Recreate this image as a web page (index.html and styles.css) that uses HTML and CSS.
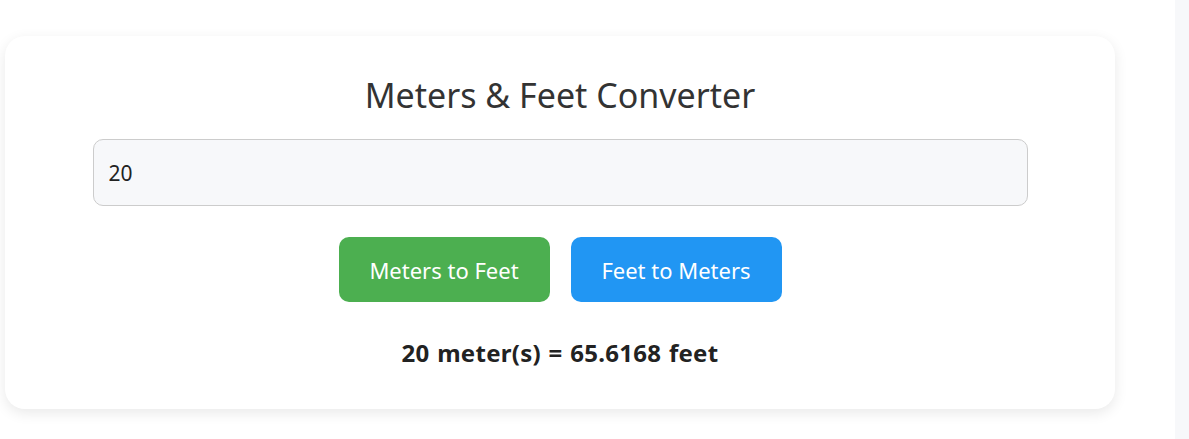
FILE: index.html
```html
<!DOCTYPE html>
<html lang="en">
<head>
    <meta charset="UTF-8">
    <meta name="viewport" content="width=device-width, initial-scale=1.0">
    <title>Meters & Feet Converter</title>
    <link rel="stylesheet" href="styles.css">
</head>
<body>
    <div class="page">
        <div class="converter">
            <h1>Meters &amp; Feet Converter</h1>
            <input type="number" id="valueInput" class="value-input" value="20">
            <div class="buttons">
                <button class="btn btn-green">Meters to Feet</button>
                <button class="btn btn-blue">Feet to Meters</button>
            </div>
            <p class="result">20 meter(s) = 65.6168 feet</p>
        </div>
    </div>
    <div class="side-strip"></div>
</body>
</html>
```
FILE: styles.css
```css
/* General Page Styling */
body {
    font-family: "Noto Sans", "Open Sans", sans-serif;
    background-color: #fff;
    margin: 0;
    padding: 0;
    display: flex;
    min-height: 100vh;
}

.page {
    flex: 1;
    padding: 36px 0 0 5px;
}

.side-strip {
    width: 14px;
    background: #f7f8fa;
}

/* Converter Card */
.converter {
    width: 1110px;
    height: 373px;
    box-sizing: border-box;
    background: #fff;
    border-radius: 20px;
    box-shadow: 0 4px 14px rgba(0, 0, 0, 0.09);
    display: flex;
    flex-direction: column;
    align-items: center;
    padding-top: 36px;
}

.converter h1 {
    margin: 0;
    font-size: 34px;
    font-weight: 400;
    color: #333;
    line-height: 46px;
}

.value-input {
    margin-top: 21px;
    width: 935px;
    height: 67px;
    box-sizing: border-box;
    border: 1px solid #ccc;
    border-radius: 10px;
    background: #f7f8fa;
    padding: 0 15px;
    font-family: inherit;
    font-size: 21px;
    color: #222;
    -moz-appearance: textfield;
}

.value-input::-webkit-inner-spin-button,
.value-input::-webkit-outer-spin-button {
    -webkit-appearance: none;
    margin: 0;
}

.buttons {
    display: flex;
    gap: 21px;
    margin-top: 31px;
}

.btn {
    width: 211px;
    height: 65px;
    border: none;
    border-radius: 10px;
    color: white;
    font-family: inherit;
    font-size: 22px;
    cursor: pointer;
}

.btn-green {
    background: #4caf50;
}

.btn-blue {
    background: #2196f3;
}

.result {
    margin: 34px 0 0;
    font-size: 24px;
    font-weight: 700;
    color: #222;
    letter-spacing: 0.3px;
    word-spacing: 1px;
}
```
